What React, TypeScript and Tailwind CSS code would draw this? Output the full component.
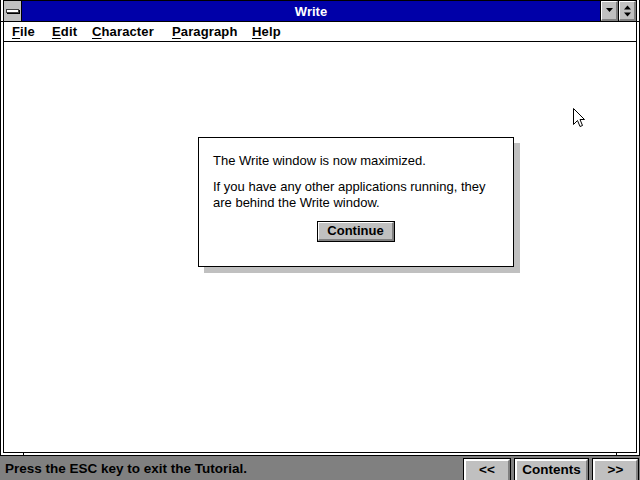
import React from "react";

const menus = [
  { label: "File", w: "w-[40px]" },
  { label: "Edit", w: "w-[40px]" },
  { label: "Character", w: "w-[80px]" },
  { label: "Paragraph", w: "w-[80px]" },
  { label: "Help", w: "w-[40px]" },
];

function TitleButton({ children }: { children: React.ReactNode }) {
  return (
    <div className="w-[18px] h-full border-l border-black bg-[#c0c0c0]">
      <div className="w-full h-full border-t border-l border-white border-b-2 border-r-2 border-b-[#808080] border-r-[#808080] flex items-center justify-center">
        {children}
      </div>
    </div>
  );
}

function BarButton({ label, w }: { label: string; w: string }) {
  return (
    <div className={`${w} h-[22px] border-t border-x border-black bg-[#c0c0c0]`}>
      <div className="w-full h-full border-t-2 border-l-2 border-white border-r-2 border-r-[#808080] flex items-center justify-center text-[13.5px] font-bold text-black">
        {label}
      </div>
    </div>
  );
}

export default function App() {
  return (
    <div className="relative w-[640px] h-[480px] overflow-hidden flex flex-col bg-[#808080] font-['Liberation_Sans',Arial,sans-serif] select-none">
      {/* window */}
      <div className="relative h-[456px] flex flex-col bg-white border-x border-b border-black px-[2px] pb-[2px]">
        <div className="flex-1 flex flex-col border border-black">
          {/* title bar */}
          <div className="h-[21px] flex border-b border-black bg-[#0000a8]">
            <div className="w-[18px] h-full bg-[#c0c0c0] border-r border-black flex items-center justify-center">
              <div className="w-[13px] h-[4px] bg-white border border-[#404040] shadow-[1px_1px_0_#000]" />
            </div>
            <div className="flex-1 flex items-center justify-center pt-[2px] text-white font-bold text-[13px]">
              Write
            </div>
            <TitleButton>
              <svg width="9" height="5" viewBox="0 0 9 5">
                <path d="M1 0h7L4.5 4z" fill="#000" />
              </svg>
            </TitleButton>
            <TitleButton>
              <svg width="9" height="12" viewBox="0 0 9 12">
                <path d="M4.5 0.5L8 4.5H1z" fill="#000" />
                <path d="M1 7.5h7L4.5 11.5z" fill="#000" />
              </svg>
            </TitleButton>
          </div>
          {/* menu bar */}
          <div className="h-[20px] flex items-center pl-[8px] border-b border-black text-[13px] tracking-[0.01em] font-bold text-black">
            {menus.map((m) => (
              <div key={m.label} className={m.w}>
                <span className="underline underline-offset-2 decoration-1">{m.label[0]}</span>
                {m.label.slice(1)}
              </div>
            ))}
          </div>
          <div className="flex-1 bg-white" />
        </div>
        {/* sizing border ticks */}
        <div className="absolute left-[22px] bottom-0 w-px h-[3px] bg-black" />
        <div className="absolute right-[22px] bottom-0 w-px h-[3px] bg-black" />
        <div className="absolute left-0 top-[21px] w-[3px] h-px bg-black" />
        <div className="absolute right-0 top-[21px] w-[3px] h-px bg-black" />
      </div>

      {/* status bar */}
      <div className="h-[24px] flex items-end justify-between">
        <div className="self-center pl-[5px] pt-[2px] text-[13.5px] font-bold text-black">
          Press the ESC key to exit the Tutorial.
        </div>
        <div className="flex gap-[3px] pr-[1px]">
          <BarButton label="<<" w="w-[48px]" />
          <BarButton label="Contents" w="w-[75px]" />
          <BarButton label=">>" w="w-[47px]" />
        </div>
      </div>

      {/* dialog */}
      <div className="absolute left-[198px] top-[137px] w-[316px] h-[130px] bg-white border border-black shadow-[6px_6px_0_0_#c0c0c0] pt-[15px] pl-[14px] text-[13px] text-black leading-[16px]">
        <p>The Write window is now maximized.</p>
        <p className="mt-[10px]">
          If you have any other applications running, they
          <br />
          are behind the Write window.
        </p>
        <div className="mt-[10px] flex justify-center pr-[14px]">
          <div className="w-[78px] h-[21px] border border-black bg-[#c0c0c0]">
            <div className="w-full h-full border-t border-l border-white border-b-2 border-r-2 border-b-[#808080] border-r-[#808080] flex items-center justify-center font-bold">
              Continue
            </div>
          </div>
        </div>
      </div>

      {/* mouse pointer */}
      <svg className="absolute left-[573px] top-[108px]" width="12" height="20" viewBox="0 0 12 20">
        <path
          d="M0.5 0.5V16.5L4.5 12.5L7 18.5L9.5 17.5L7 11.5H11.5Z"
          fill="#fff"
          stroke="#000"
          strokeWidth="1"
        />
      </svg>
    </div>
  );
}
